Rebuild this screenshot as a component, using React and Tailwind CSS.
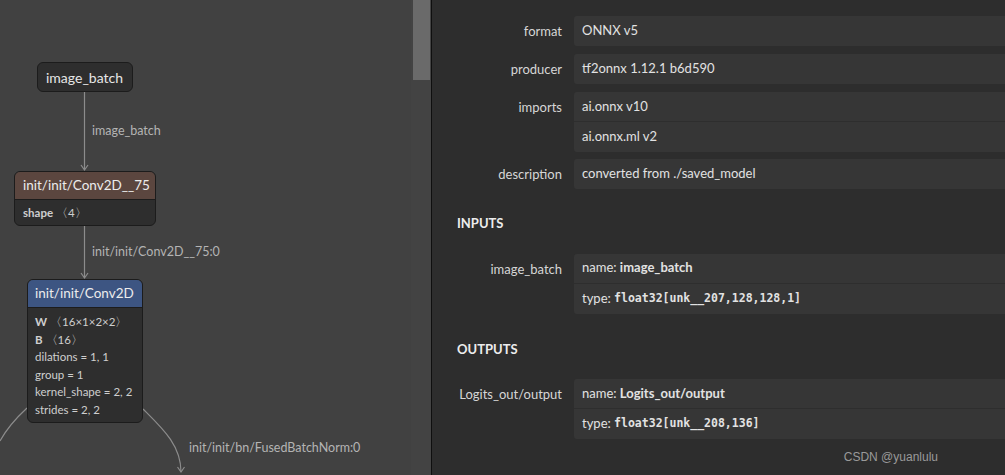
import React from 'react';

const ui = { fontFamily: 'Lato, "Noto Sans", sans-serif' };
const mono = { fontFamily: '"DejaVu Sans Mono", "Liberation Mono", monospace' };

const Graph = () => (
  <div className="relative w-[431px] h-[475px] shrink-0 bg-[#414141] overflow-hidden" style={ui}>
    {/* edges */}
    <svg className="absolute inset-0" width="431" height="475">
      <g stroke="#8c8c8c" strokeWidth="1.2" fill="none">
        <path d="M84.5 91 V169" />
        <path d="M81 165 L84.5 170 L88 165" />
        <path d="M84.5 225 V277" />
        <path d="M81 273 L84.5 278 L88 273" />
        <path d="M27 408 C14 420 6 430 0 441" />
        <path d="M143 409 C162 428 181 445 181 472" />
        <path d="M177.5 467 L181 472 L184.5 467" />
      </g>
    </svg>

    <span className="absolute left-[92px] top-[122px] text-[12.5px] text-[#b4b4b4]">image_batch</span>
    <span className="absolute left-[92px] top-[243px] text-[12.5px] text-[#b4b4b4]">init/init/Conv2D__75:0</span>
    <span className="absolute left-[189px] top-[439px] text-[12.5px] text-[#b4b4b4]">init/init/bn/FusedBatchNorm:0</span>

    {/* input node */}
    <div className="absolute left-[37px] top-[62px] w-[96px] h-[30px] rounded-[6px] border border-[#1c1c1c] bg-[#2e2e2e] flex items-center px-[8px] text-[14px] text-[#e6e6e6]">
      image_batch
    </div>

    {/* Conv2D__75 */}
    <div className="absolute left-[14px] top-[171px] w-[142px] rounded-[6px] border border-[#1c1c1c] bg-[#2e2e2e] overflow-hidden">
      <div className="h-[28px] bg-[#5b463f] flex items-center px-[8px] text-[13.5px] text-[#ececec] border-b border-[#1c1c1c]">
        init/init/Conv2D__75
      </div>
      <div className="h-[25px] flex items-center px-[8px] text-[11.5px] text-[#cfcfcf]">
        <b>shape</b>&nbsp;〈4〉
      </div>
    </div>

    {/* Conv2D */}
    <div className="absolute left-[27px] top-[279px] w-[116px] rounded-[6px] border border-[#1c1c1c] bg-[#2e2e2e] overflow-hidden">
      <div className="h-[28px] bg-[#3d5582] flex items-center px-[7px] text-[13.5px] text-[#ececec] border-b border-[#1c1c1c]">
        init/init/Conv2D
      </div>
      <div className="flex flex-col px-[7px] pt-[5px] pb-[4px] text-[11.5px] leading-[17.5px] text-[#cfcfcf]">
        <div><b>W</b> 〈16×1×2×2〉</div>
        <div><b>B</b> 〈16〉</div>
        <div>dilations = 1, 1</div>
        <div>group = 1</div>
        <div>kernel_shape = 2, 2</div>
        <div>strides = 2, 2</div>
      </div>
    </div>

    {/* scrollbar */}
    <div className="absolute right-0 top-0 w-[20px] h-full bg-[#434343]">
      <div className="ml-[2px] w-[17px] h-[80px] bg-[#6a6a6a]" />
    </div>
  </div>
);

const Cell = ({ children, last }) => (
  <div className={`h-[30px] flex items-center px-[8px] ${last ? '' : 'border-b border-[#2e2e2e]'}`}>{children}</div>
);

const Row = ({ label, children, className = '' }) => (
  <div className={`flex gap-[12px] ${className}`}>
    <div className="w-[130px] shrink-0 text-right pt-[6px] text-[13px] text-[#d6d6d6]">{label}</div>
    <div className="flex-1 bg-[#363636] rounded-l-[3px] text-[13px] text-[#e2e2e2] flex flex-col">{children}</div>
  </div>
);

const Heading = ({ children }) => (
  <div className="pl-[25px] text-[13px] font-bold text-[#ececec]">{children}</div>
);

export default function App() {
  return (
    <div className="flex w-[1005px] h-[475px] overflow-hidden bg-[#2d2d2d]" style={ui}>
      <Graph />
      <div className="w-[1px] shrink-0 bg-[#0f0f0f]" />
      <div className="relative flex-1 flex flex-col pt-[16px]">
        <Row label="format"><Cell last>ONNX v5</Cell></Row>
        <Row label="producer" className="mt-[8px]"><Cell last>tf2onnx 1.12.1 b6d590</Cell></Row>
        <Row label="imports" className="mt-[8px]">
          <Cell>ai.onnx v10</Cell>
          <Cell last>ai.onnx.ml v2</Cell>
        </Row>
        <Row label="description" className="mt-[7px]"><Cell last>converted from ./saved_model</Cell></Row>

        <div className="mt-[25px]"><Heading>INPUTS</Heading></div>
        <Row label="image_batch" className="mt-[20px]">
          <Cell>name:&nbsp;<b>image_batch</b></Cell>
          <Cell last>type:&nbsp;<b style={mono} className="text-[11.5px]">float32[unk__207,128,128,1]</b></Cell>
        </Row>

        <div className="mt-[26px]"><Heading>OUTPUTS</Heading></div>
        <Row label="Logits_out/output" className="mt-[20px]">
          <Cell>name:&nbsp;<b>Logits_out/output</b></Cell>
          <Cell last>type:&nbsp;<b style={mono} className="text-[11.5px]">float32[unk__208,136]</b></Cell>
        </Row>

        <div className="absolute right-[67px] bottom-[9px] text-[12px] text-[#9a9a9a]" style={{ fontFamily: '"Liberation Sans", Arial, sans-serif' }}>
          CSDN @yuanlulu
        </div>
      </div>
    </div>
  );
}
